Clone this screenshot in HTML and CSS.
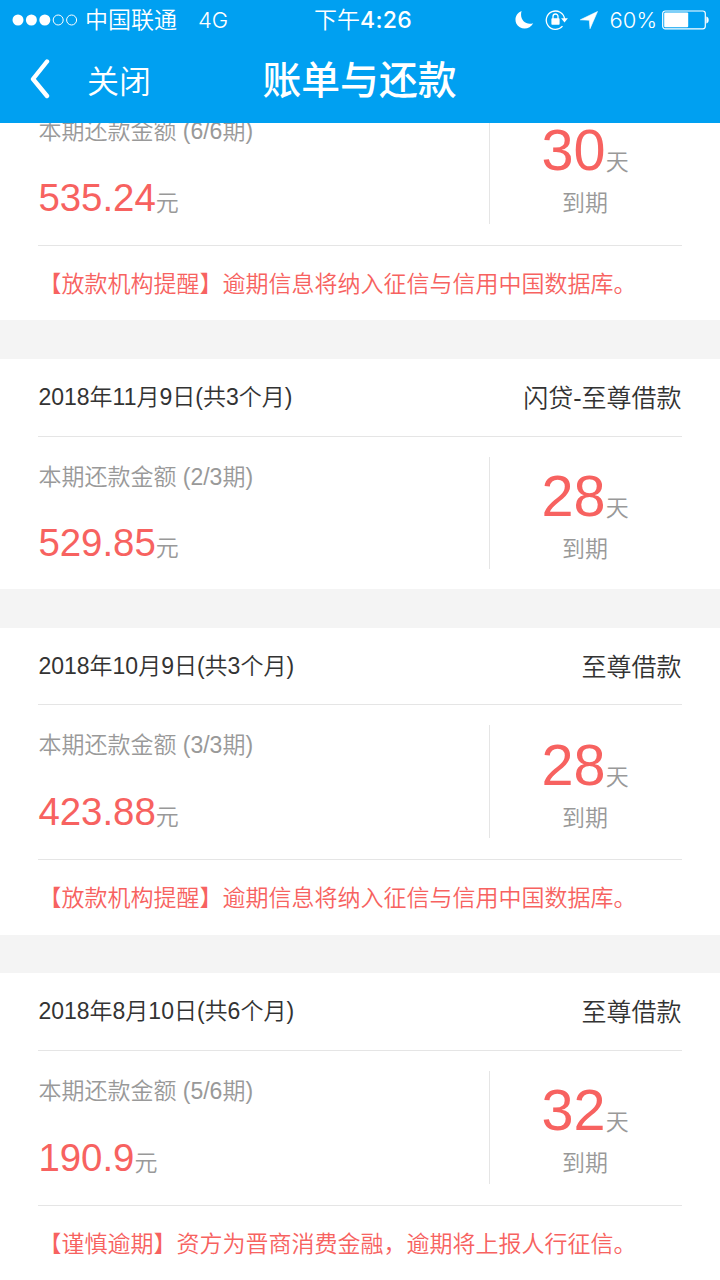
FILE: index.html
```html
<!DOCTYPE html>
<html lang="zh-CN">
<head>
    <meta charset="UTF-8">
    <meta name="viewport" content="width=device-width, initial-scale=1.0">
    <title>账单与还款</title>
    <link rel="stylesheet" href="styles.css">
</head>
<body>
    <header class="header">
        <div class="status-bar">
            <div class="status-left">
                <svg class="signal" width="66" height="12" viewBox="0 0 66 12">
                    <g fill="#fff">
                        <circle cx="6" cy="6" r="5.5"/>
                        <circle cx="19.4" cy="6" r="5.5"/>
                        <circle cx="32.8" cy="6" r="5.5"/>
                    </g>
                    <g fill="none" stroke="#fff" stroke-width="1">
                        <circle cx="46.2" cy="6" r="5"/>
                        <circle cx="59.6" cy="6" r="5"/>
                    </g>
                </svg>
                <span class="carrier">中国联通</span>
                <span class="network">4G</span>
            </div>
            <div class="clock">下午<b>4:26</b></div>
            <div class="status-right">
                <svg class="moon" width="19" height="20" viewBox="0 0 19 20">
                    <path d="M6.600 1C1.200 3-0.900 9 1.400 13.700c3.200 6.400 13.300 6.600 16.800-0.500C11 16 4 9.500 6.600 1z" fill="#fff"/>
                </svg>
                <svg class="lock" width="23" height="22" viewBox="0 0 23 22">
                    <path d="M17.500 17.200A9.200 9.200 0 1 1 19.600 10" fill="none" stroke="#fff" stroke-width="1.300"/>
                    <path d="M16.100 9.200h6.800l-3.400 4.200z" fill="#fff"/>
                    <rect x="6.400" y="9.300" width="8.200" height="6.500" rx="0.800" fill="#fff"/>
                    <path d="M8 10V7.500a2.500 2.500 0 0 1 5 0V10" fill="none" stroke="#fff" stroke-width="1.300"/>
                </svg>
                <svg class="arrow" width="18" height="18" viewBox="0 0 18 18">
                    <path d="M17.500 0.500L0.300 8.800l9 0.400 0.700 8.500z" fill="#fff" stroke="#fff" stroke-width="0.600"/>
                </svg>
                <span class="percent">60%</span>
                <svg class="battery" width="47" height="20" viewBox="0 0 47 20">
                    <rect x="0.700" y="1" width="42.600" height="17.800" rx="2.500" fill="none" stroke="#fff" stroke-width="1.200"/>
                    <rect x="2.200" y="2.600" width="24" height="14.600" rx="1" fill="#fff"/>
                    <path d="M44.300 6.500c3.200 0.800 3.200 6.100 0 6.900z" fill="#fff"/>
                </svg>
            </div>
        </div>
        <nav class="nav">
            <div class="nav-left">
                <svg class="back" width="20" height="40" viewBox="0 0 20 40">
                    <path d="M17 2.500L3 20L17 37" fill="none" stroke="#fff" stroke-width="4.400" stroke-linecap="round" stroke-linejoin="round"/>
                </svg>
                <span class="close">关闭</span>
            </div>
            <h1>账单与还款</h1>
        </nav>
    </header>

    <main class="list">
        <section class="card">
            <div class="card-body">
                <div class="amount-box">
                    <p class="label">本期还款金额 (6/6期)</p>
                    <p class="amount">535.24<span>元</span></p>
                </div>
                <div class="days-box">
                    <p class="days">30<span>天</span></p>
                    <p class="due">到期</p>
                </div>
            </div>
            <p class="notice">【放款机构提醒】逾期信息将纳入征信与信用中国数据库。</p>
        </section>

        <section class="card">
            <div class="card-head">
                <span class="date">2018年11月9日(共3个月)</span>
                <span class="product">闪贷-至尊借款</span>
            </div>
            <div class="card-body">
                <div class="amount-box">
                    <p class="label">本期还款金额 (2/3期)</p>
                    <p class="amount">529.85<span>元</span></p>
                </div>
                <div class="days-box">
                    <p class="days">28<span>天</span></p>
                    <p class="due">到期</p>
                </div>
            </div>
        </section>

        <section class="card">
            <div class="card-head">
                <span class="date">2018年10月9日(共3个月)</span>
                <span class="product">至尊借款</span>
            </div>
            <div class="card-body">
                <div class="amount-box">
                    <p class="label">本期还款金额 (3/3期)</p>
                    <p class="amount">423.88<span>元</span></p>
                </div>
                <div class="days-box">
                    <p class="days">28<span>天</span></p>
                    <p class="due">到期</p>
                </div>
            </div>
            <p class="notice">【放款机构提醒】逾期信息将纳入征信与信用中国数据库。</p>
        </section>

        <section class="card">
            <div class="card-head">
                <span class="date">2018年8月10日(共6个月)</span>
                <span class="product">至尊借款</span>
            </div>
            <div class="card-body">
                <div class="amount-box">
                    <p class="label">本期还款金额 (5/6期)</p>
                    <p class="amount">190.9<span>元</span></p>
                </div>
                <div class="days-box">
                    <p class="days">32<span>天</span></p>
                    <p class="due">到期</p>
                </div>
            </div>
            <p class="notice">【谨慎逾期】资方为晋商消费金融，逾期将上报人行征信。</p>
        </section>
    </main>
</body>
</html>
```

FILE: styles.css
```css
* {
    box-sizing: border-box;
    margin: 0;
    padding: 0;
}
body {
    width: 720px;
    height: 1280px;
    overflow: hidden;
    background: #f4f4f4;
    font-family: "Liberation Sans", "Noto Sans CJK SC", sans-serif;
    font-weight: 350;
    color: #333;
}
svg {
    display: block;
    flex: none;
}

/* header */
.header {
    position: relative;
    z-index: 1;
    height: 123px;
    background: #00a0f1;
    color: #fff;
}
.status-bar {
    display: grid;
    grid-template-columns: 1fr auto 1fr;
    height: 40px;
    padding: 0 11px 0 12px;
    font-family: Inter, "Noto Sans CJK SC", sans-serif;
    font-size: 23px;
    line-height: 40px;
}
.status-left,
.status-right {
    display: flex;
    align-items: center;
}
.status-right {
    justify-content: flex-end;
}
.carrier {
    margin-left: 7px;
}
.network {
    margin-left: 21px;
    font-size: 22px;
}
.clock {
    margin-left: 5px;
}
.clock b {
    font-weight: 500;
    letter-spacing: 0.3px;
}
.lock {
    margin-left: 11px;
}
.arrow {
    margin-left: 12px;
}
.percent {
    margin-left: 12px;
    font-size: 22px;
}
.battery {
    margin-left: 5px;
}
.nav {
    display: grid;
    grid-template-columns: 1fr auto 1fr;
    align-items: center;
    height: 78px;
    padding-left: 30px;
}
.nav-left {
    display: flex;
    align-items: center;
}
.close {
    margin-left: 37px;
    font-size: 32px;
}
.nav h1 {
    margin: 0 31px 5px 0;
    font-size: 38.8px;
    font-weight: 500;
}

/* bills */
.list {
    margin-top: -33px;
}
.card {
    margin-bottom: 38.4px;
    padding: 0 38.4px;
    background: #fff;
}
.card-head {
    display: flex;
    justify-content: space-between;
    height: 76.8px;
    line-height: 77.6px;
    font-size: 23px;
}
.product {
    padding-top: 1px;
    font-size: 25px;
}
.card-body {
    display: flex;
    height: 153.6px;
    padding: 20px 0;
    border-top: 1px solid #e5e5e5;
}
.amount-box {
    flex: 1;
}
.label,
.due {
    font-size: 23px;
    line-height: 41px;
    color: #999;
}
.amount {
    margin-top: 17.6px;
    font-size: 38.4px;
    line-height: 56px;
    color: #f76260;
}
.amount span,
.days span {
    font-size: 23px;
    color: #999;
}
.days-box {
    width: 193px;
    padding-right: 1px;
    border-left: 1px solid #e5e5e5;
    text-align: center;
}
.days {
    height: 56px;
    margin-top: 4.4px;
    font-size: 57.6px;
    line-height: 70px;
    color: #f76260;
}
.due {
    margin-top: 12px;
}
.notice {
    height: 75.8px;
    margin-top: 1px;
    border-top: 1px solid #e5e5e5;
    font-size: 23px;
    line-height: 76px;
    color: #f76260;
    white-space: nowrap;
}
```
